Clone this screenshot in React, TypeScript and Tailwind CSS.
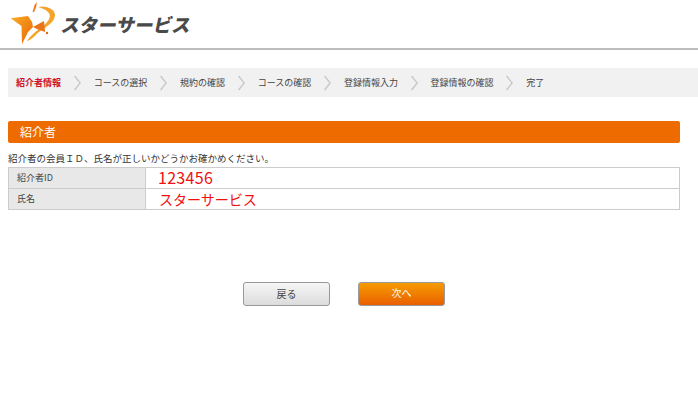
const font = { fontFamily: '"Noto Sans CJK JP", "Liberation Sans", sans-serif' };

function Chevron() {
  return (
    <svg width="7" height="16" viewBox="0 0 7 16" className="shrink-0">
      <path d="M0.6 1 L6.2 8 L0.6 15" fill="none" stroke="#c8c8c8" strokeWidth="1.4" />
    </svg>
  );
}

function Logo() {
  return (
    <svg width="46" height="46" viewBox="10 2 46 46" className="shrink-0">
      <defs>
        <linearGradient id="g" x1="0" y1="0" x2="1" y2="1">
          <stop offset="0" stopColor="#f9ac22" />
          <stop offset="1" stopColor="#ea650a" />
        </linearGradient>
      </defs>
      <path d="M10.7 19.3 L28 17 L32 23 L33 28 L28 33 L22 45 L21.5 27 Z" fill="url(#g)" />
      <path d="M32.5 13 L34.5 6 L37 3 L36 9 L34 13 Z" fill="#ee7f24" />
      <path d="M38 8 C46 6 55 10 55 16 C55 23 46 28 39 33 C35 36 32 41 27 42 C30 37 36 32 43 27 C49 22 52 17 48 13 C45 10 41 9 38 8 Z" fill="#f4a42a" />
      <path d="M33 28 L44 22 L45 33 L37 30 Z" fill="#e9741a" />
      <circle cx="47" cy="34" r="1.2" fill="#e2660f" />
    </svg>
  );
}

const steps = ["コースの選択", "規約の確認", "コースの確認", "登録情報入力", "登録情報の確認", "完了"];

export default function App() {
  return (
    <div className="w-[698px] h-[415px] bg-white overflow-hidden" style={font}>
      <header className="h-[50px] border-b-2 border-[#bdbdbd] flex items-center pl-[10px] gap-[6px]">
        <Logo />
        <span className="text-[18.5px] font-black text-[#4a4a4a] -skew-x-12 leading-none whitespace-nowrap">
          スターサービス
        </span>
      </header>

      <nav className="mt-[18px] ml-2 h-[29px] bg-[#f1f1f1] flex items-center pl-2 gap-[12.85px] text-[9px] text-[#444] whitespace-nowrap">
        <span className="font-bold text-[#d0102a]">紹介者情報</span>
        {steps.map((s) => (
          <div key={s} className="flex items-center gap-[12.85px]">
            <Chevron />
            <span>{s}</span>
          </div>
        ))}
      </nav>

      <main className="ml-2 w-[672px]">
        <h2 className="mt-6 h-[22px] bg-[#ee6b00] rounded-[2px] pl-3 flex items-center text-white text-[12px] font-normal leading-none">
          紹介者
        </h2>
        <p className="mt-2 h-4 text-[9.5px] leading-[15px] text-[#333] whitespace-nowrap">
          紹介者の会員ＩＤ、氏名が正しいかどうかお確かめください。
        </p>
        <div className="border border-[#cccccc] text-[9px] text-[#444]">
          <div className="flex h-[21px] border-b border-[#cccccc]">
            <div className="w-[137px] bg-[#e8e8e8] border-r border-[#cccccc] pl-2 flex items-center">紹介者ID</div>
            <div className="flex-1 pl-[12px] pb-[3px] flex items-center text-[16px] text-[#f01010] leading-none tracking-[0.3px]">123456</div>
          </div>
          <div className="flex h-[20px]">
            <div className="w-[137px] bg-[#e8e8e8] border-r border-[#cccccc] pl-2 flex items-center">氏名</div>
            <div className="flex-1 pl-[13px] flex items-center text-[14px] text-[#f01010] leading-none">スターサービス</div>
          </div>
        </div>
      </main>

      <div className="mt-[72px] pr-[10px] flex justify-center gap-[28px]">
        <button className="w-[87px] h-[24px] pb-[2px] rounded-[3px] border border-[#999] bg-gradient-to-b from-[#f6f6f6] to-[#dcdcdc] text-[10px] text-[#444]">
          戻る
        </button>
        <button className="w-[87px] h-[24px] pb-[3px] rounded-[3px] border border-[#999] bg-gradient-to-b from-[#f59a00] to-[#ea5f00] text-[10px] text-white font-normal">
          次へ
        </button>
      </div>
    </div>
  );
}
